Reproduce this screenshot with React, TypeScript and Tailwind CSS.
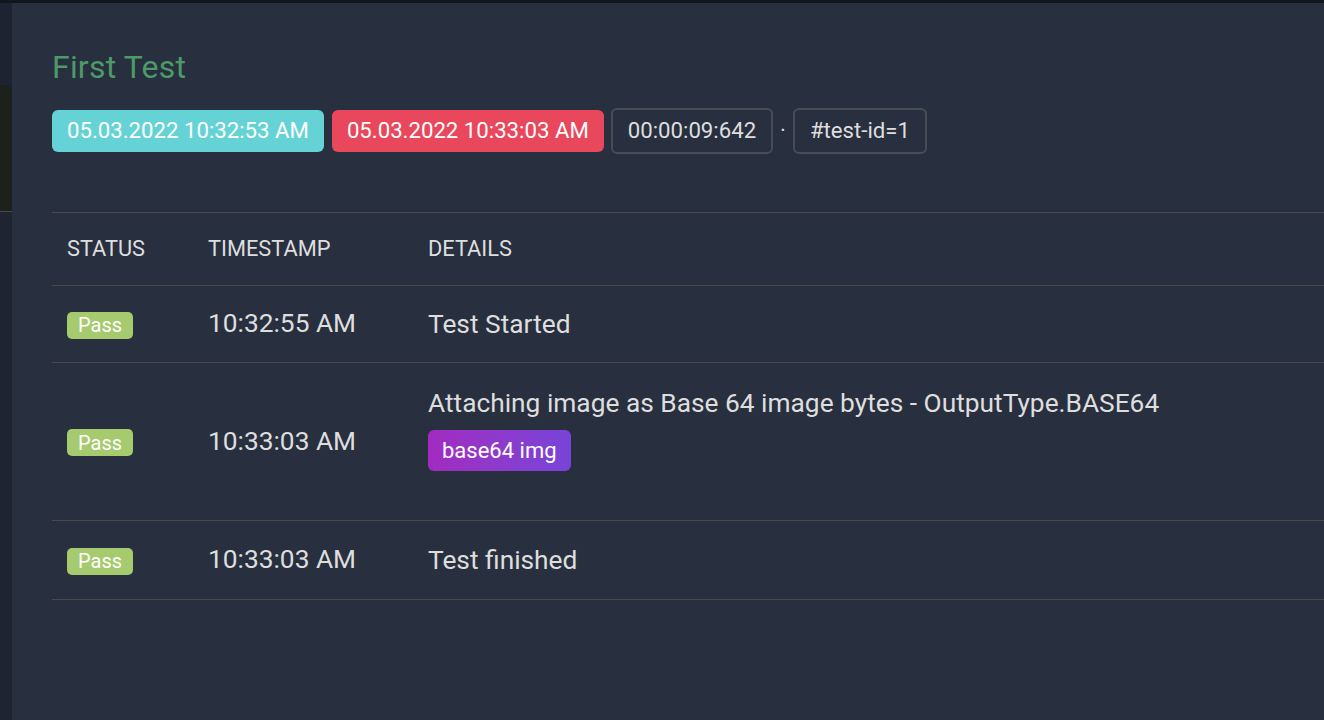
import React from 'react';

const rows = [
  { time: '10:32:55 AM', details: 'Test Started', h: 'h-[77px]' },
  { time: '10:33:03 AM', details: 'Attaching image as Base 64 image bytes - OutputType.BASE64', h: 'h-[158px]', media: 'base64 img' },
  { time: '10:33:03 AM', details: 'Test finished', h: 'h-[79px]' },
];

const PassBadge = () => (
  <span className="inline-flex h-[27px] items-center rounded-[5px] bg-[#a6ca6e] px-[11px] text-[20px] text-white">Pass</span>
);

const App: React.FC = () => {
  return (
    <div className="flex h-[720px] w-[1324px] flex-col overflow-hidden bg-[#141820] font-['Roboto',sans-serif]">
      <div className="h-[3px] shrink-0 bg-[#11151c]" />
      <div className="flex flex-1">
        {/* backdrop strip */}
        <div className="flex w-[12px] shrink-0 flex-col">
          <div className="h-[82px] bg-[#1e2331]" />
          <div className="h-[127px] border-b border-[#4a4a4a] bg-[#1c211c]" />
          <div className="flex-1 bg-[#1f2432]" />
        </div>

        <div className="flex-1 bg-[#283040] pl-[40px] pt-[44px]">
          <h1 className="text-[32px] leading-[40px] tracking-[0.2px] text-[#4c9a69]">First Test</h1>

          <div className="mt-[21px] flex items-center text-[22.2px] text-white">
            <span className="flex h-[42px] items-center rounded-[6px] bg-[#65d3d6] px-[15px]">05.03.2022 10:32:53 AM</span>
            <span className="ml-[8px] flex h-[42px] items-center rounded-[6px] bg-[#e9475c] px-[15px]">05.03.2022 10:33:03 AM</span>
            <span className="ml-[7px] flex h-[46px] items-center rounded-[6px] border-2 border-[#474c55] px-[15px] text-[#dedede]">00:00:09:642</span>
            <span className="mx-[7px] text-[#dedede]">·</span>
            <span className="flex h-[46px] items-center rounded-[6px] border-2 border-[#474c55] px-[15px] text-[#dedede]">#test-id=1</span>
          </div>

          <div className="mt-[58px] border-b border-[#4a4a4a] text-[#dedede]">
            <div className="grid h-[73px] grid-cols-[141px_220px_1fr] items-center border-t border-[#4a4a4a] text-[21.8px]">
              <div className="px-[15px]">STATUS</div>
              <div className="px-[15px]">TIMESTAMP</div>
              <div className="px-[15px]">DETAILS</div>
            </div>
            {rows.map((r, i) => (
              <div key={i} className={`grid ${r.h} grid-cols-[141px_220px_1fr] items-center border-t border-[#4a4a4a] text-[26.3px]`}>
                <div className="px-[15px]"><PassBadge /></div>
                <div className="px-[15px]">{r.time}</div>
                <div className={r.media ? 'px-[15px] pb-[25px]' : 'px-[15px]'}>
                  <div className="leading-[30px]">{r.details}</div>
                  {r.media && (
                    <span className="mt-[12px] inline-flex h-[41px] items-center rounded-[6px] bg-gradient-to-r from-[#a22ac0] to-[#7744d8] px-[14px] text-[22px] text-white">
                      {r.media}
                    </span>
                  )}
                </div>
              </div>
            ))}
          </div>
        </div>
      </div>
    </div>
  );
};

export default App;
